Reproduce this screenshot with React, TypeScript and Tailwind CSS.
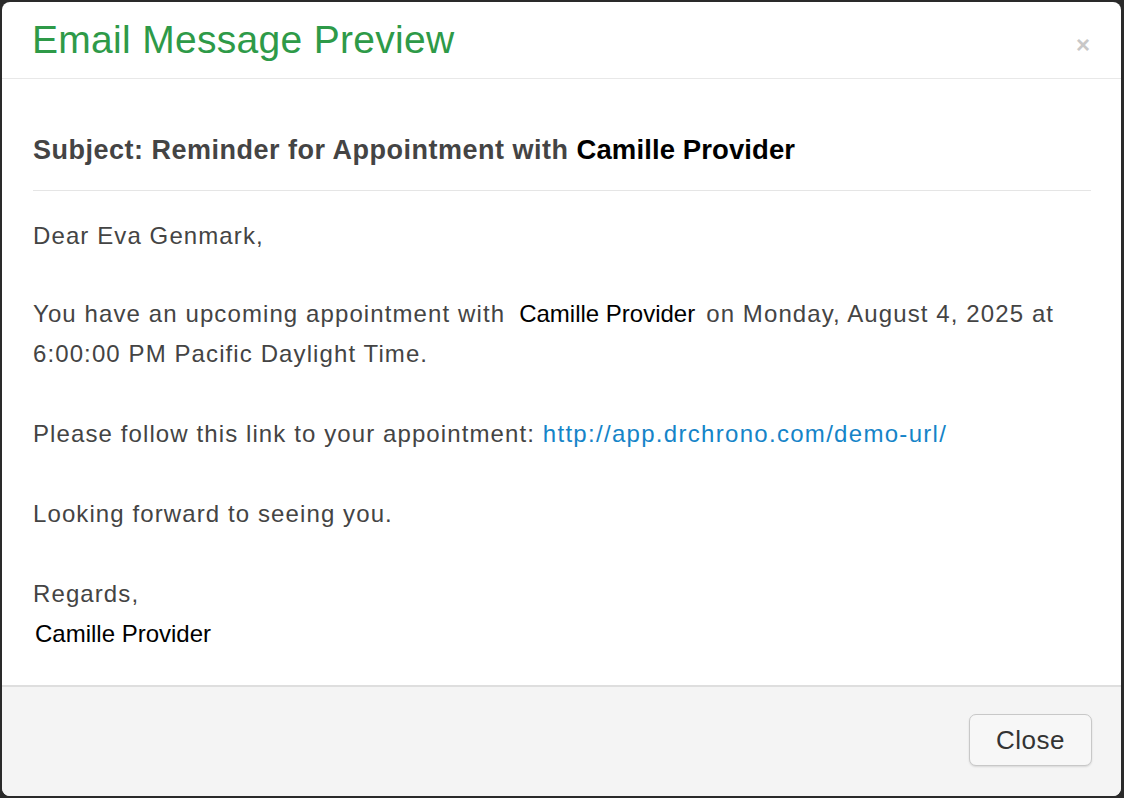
import React from "react";

export default function App() {
  const body = "text-[#444444] text-[24px] leading-[40px] tracking-[1.1px]";
  return (
    <div
      className="w-[1124px] h-[798px] bg-[#2a2a2a] p-[2px] pr-[3px]"
      style={{ fontFamily: '"Liberation Sans", Arial, Helvetica, sans-serif' }}
    >
      <div className="flex h-full flex-col overflow-hidden rounded-[8px] bg-white">
        {/* Header */}
        <div className="flex h-[77px] items-center justify-between border-b border-[#e8e8e8] pl-[30px] pr-[31px]">
          <h3 className="text-[39px] leading-[40px] text-[#2e9a48] tracking-[0.3px] pb-[1px]">
            Email Message Preview
          </h3>
          <span className="mt-[10px] text-[24px] font-bold leading-none text-[#c8c8c8]">×</span>
        </div>

        {/* Body */}
        <div className="flex-1 pl-[31px] pr-[30px] pt-[51px]">
          <div className="border-b border-[#e5e5e5] pb-[20px]">
            <h4 className="text-[27px] leading-[40px] font-bold text-[#444444] tracking-[0.5px]">
              Subject: Reminder for Appointment with{" "}
              <span className="text-black text-[27.5px] tracking-[0.1px]">Camille Provider</span>
            </h4>
          </div>
          <div className="pt-[25px]">
            <p className={`${body} mb-[38px]`}>Dear Eva Genmark,</p>
            <p className={`${body} mb-[40px]`}>
              You have an upcoming appointment with
              <span className="inline-block text-black tracking-normal ml-[14px] mr-[11px]">Camille Provider</span>
              on Monday, August 4, 2025 at 6:00:00 PM Pacific Daylight Time.
            </p>
            <p className={`${body} mb-[40px] tracking-[1.0px]`}>
              Please follow this link to your appointment:{" "}
              <a className="text-[#1584c8] tracking-[1.3px]" href="#">
                http://app.drchrono.com/demo-url/
              </a>
            </p>
            <p className={`${body} mb-[40px]`}>Looking forward to seeing you.</p>
            <p className={`${body} leading-[39px]`}>Regards,</p>
            <p className="text-black text-[24px] leading-[40px] pl-[2px]">Camille Provider</p>
          </div>
        </div>

        {/* Footer */}
        <div className="flex h-[111px] items-start justify-end border-t-2 border-[#dedede] bg-[#f4f4f4] pr-[29px] pt-[27px]">
          <button className="h-[52px] w-[123px] rounded-[7px] border border-[#c8c8c8] bg-[#f7f7f7] text-[26px] text-[#333333] shadow-[0_1px_2px_rgba(0,0,0,0.12)] tracking-[0.5px]">
            Close
          </button>
        </div>
      </div>
    </div>
  );
}
